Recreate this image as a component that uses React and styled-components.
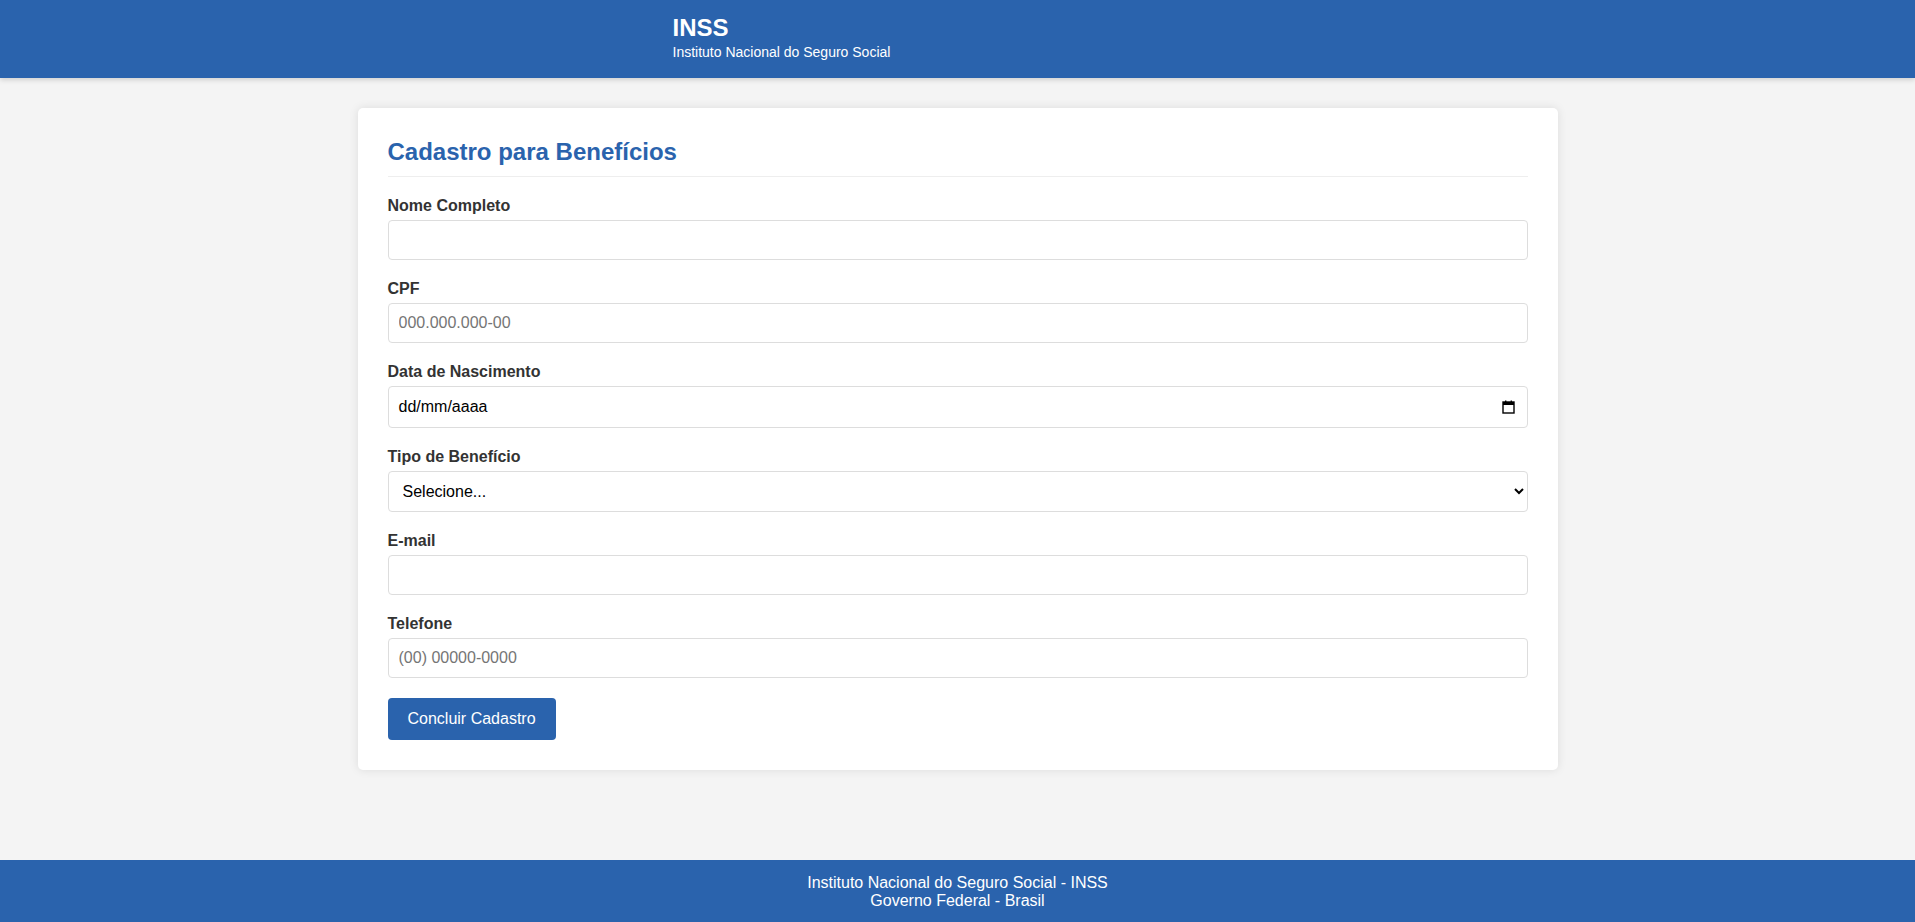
import styled, { createGlobalStyle } from "styled-components";

const GlobalStyle = createGlobalStyle`
    * { box-sizing: border-box; }
    body {
        margin: 0;
        font-family: "Liberation Sans", Arial, sans-serif;
        background: #f4f4f4;
        color: #333;
    }
`

const fields = [
    { id: "nome", label: "Nome Completo", type: "text" },
    { id: "cpf", label: "CPF", type: "text", placeholder: "000.000.000-00" },
    { id: "nascimento", label: "Data de Nascimento", type: "date" },
    { id: "beneficio", label: "Tipo de Benefício", type: "select" },
    { id: "email", label: "E-mail", type: "email" },
    { id: "telefone", label: "Telefone", type: "tel", placeholder: "(00) 00000-0000" },
]

export default function App() {
    return (
        <>
            <GlobalStyle />
            <Header>
                <div className="headerInner">
                    <h1>INSS</h1>
                    <p>Instituto Nacional do Seguro Social</p>
                </div>
            </Header>

            <Main>
                <Card>
                    <h2>Cadastro para Benefícios</h2>
                    <form onSubmit={e => e.preventDefault()} lang="pt-BR">
                        {fields.map(f => (
                            <FormGroup key={f.id}>
                                <label htmlFor={f.id}>{f.label}</label>
                                {f.type === "select" ? (
                                    <select id={f.id} defaultValue="">
                                        <option value="">Selecione...</option>
                                        <option value="aposentadoria">Aposentadoria</option>
                                        <option value="auxilio">Auxílio-doença</option>
                                        <option value="pensao">Pensão por morte</option>
                                    </select>
                                ) : f.type === "date" ? (
                                    <DateField>
                                        <span>dd/mm/aaaa</span>
                                        <svg width="13" height="14" viewBox="0 0 13 14">
                                            <rect x="1" y="2" width="11" height="11" fill="none" stroke="#000" strokeWidth="1.4" />
                                            <rect x="1" y="2" width="11" height="3" fill="#000" />
                                            <rect x="3" y="0.5" width="1.4" height="2" fill="#000" />
                                            <rect x="8.6" y="0.5" width="1.4" height="2" fill="#000" />
                                        </svg>
                                    </DateField>
                                ) : (
                                    <input id={f.id} type={f.type} placeholder={f.placeholder} />
                                )}
                            </FormGroup>
                        ))}
                        <SubmitButton type="submit">Concluir Cadastro</SubmitButton>
                    </form>
                </Card>
            </Main>

            <Footer>
                <p>Instituto Nacional do Seguro Social - INSS</p>
                <p>Governo Federal - Brasil</p>
            </Footer>
        </>
    )
}

const Header = styled.header`
    background: #2a63ad;
    color: #fff;
    padding: 14px 0 18px;
    box-shadow: 0 2px 5px rgba(0,0,0,.15);
    position: relative;

    .headerInner{
        max-width: 1200px;
        margin: 0 auto;
        padding-left: 315px;

        h1{
            margin: 0 0 2px;
            font-size: 24px;
            font-weight: bold;
        }

        p{
            margin: 0;
            font-size: 14px;
        }
    }
`

const Main = styled.main`
    max-width: 1200px;
    margin: 0 auto;
    padding: 30px 0 90px;
`

const Card = styled.section`
    background: #fff;
    border-radius: 5px;
    box-shadow: 0 0 10px rgba(0,0,0,.1);
    padding: 30px;

    h2{
        margin: 0 0 20px;
        padding-bottom: 10px;
        border-bottom: 1px solid #eee;
        color: #2a63ad;
        font-size: 24px;
    }
`

const FormGroup = styled.div`
    margin-bottom: 20px;

    label{
        display: block;
        margin-bottom: 5px;
        font-weight: bold;
        font-size: 16px;
        color: #333;
    }

    input, select{
        width: 100%;
        padding: 10px;
        border: 1px solid #ddd;
        border-radius: 4px;
        font-family: "Liberation Sans", Arial, sans-serif;
        font-size: 16px;
        color: #000;
        background: #fff;
        outline: none;
    }

    input::placeholder{
        color: #757575;
    }
`

const DateField = styled.div`
    display: flex;
    align-items: center;
    justify-content: space-between;
    height: 42px;
    padding: 0 10px;
    border: 1px solid #ddd;
    border-radius: 4px;
    font-size: 16px;
    color: #000;

    svg{
        margin-right: 2px;
    }
`

const SubmitButton = styled.button`
    background: #2a63ad;
    color: #fff;
    border: none;
    border-radius: 4px;
    padding: 12px 20px;
    font-family: "Liberation Sans", Arial, sans-serif;
    font-size: 16px;
    cursor: pointer;
`

const Footer = styled.footer`
    background: #2a63ad;
    color: #fff;
    text-align: center;
    padding: 14px 0 15px;

    p{
        margin: 0;
        font-size: 16px;
    }
`
